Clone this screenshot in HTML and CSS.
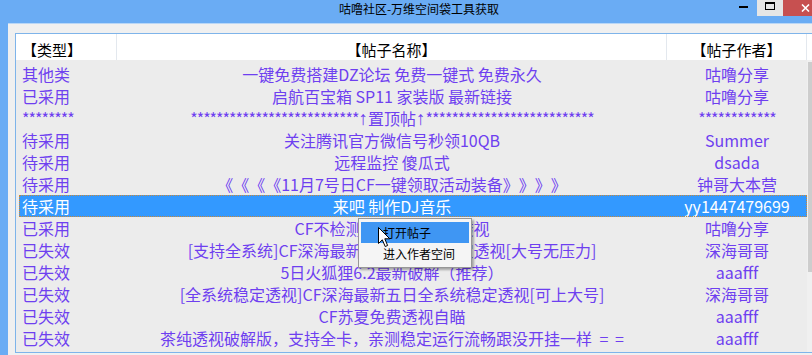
FILE: index.html
```html
<!DOCTYPE html>
<html lang="zh-CN">
  <head>
    <meta charset="UTF-8" />
    <title>咕噜社区-万维空间袋工具获取</title>
    <link rel="stylesheet" href="styles.css">
  </head>
  <body>
    <div class="window">
      <div class="titlebar">
        <div class="title">咕噜社区-万维空间袋工具获取</div>
        <div class="controls">
          <span class="btn min"><i></i></span>
          <span class="btn max"><i></i></span>
          <span class="btn close">
            <svg width="9" height="8" viewBox="0 0 9 8"><path d="M1 0.5 L8 7.5 M8 0.5 L1 7.5" stroke="#fff" stroke-width="1.6" fill="none" /></svg>
          </span>
        </div>
      </div>

      <div class="client">
        <div class="list">
          <div class="head">
            <div class="hc c1">【类型】</div>
            <div class="hc c2">【帖子名称】</div>
            <div class="hc c3">【帖子作者】</div>
            <div class="hc c4"></div>
          </div>
          <div class="body">
            <div class="rows">
              <div class="row"><span class="c1">其他类</span><span class="c2">一键免费搭建DZ论坛 免费一键式 免费永久</span><span class="c3">咕噜分享</span></div>
              <div class="row"><span class="c1">已采用</span><span class="c2">启航百宝箱 SP11 家装版 最新链接</span><span class="c3">咕噜分享</span></div>
              <div class="row"><span class="c1"><b class="stars">********</b></span><span class="c2"><b class="stars">**************************</b><b class="arrow">↑</b>置顶帖<b class="arrow">↑</b><b class="stars">**************************</b></span><span class="c3"><b class="stars">************</b></span></div>
              <div class="row"><span class="c1">待采用</span><span class="c2">关注腾讯官方微信号秒领10QB</span><span class="c3">Summer</span></div>
              <div class="row"><span class="c1">待采用</span><span class="c2">远程监控 傻瓜式</span><span class="c3">dsada</span></div>
              <div class="row"><span class="c1">待采用</span><span class="c2">《《《《11月7号日CF一键领取活动装备》》》》</span><span class="c3">钟哥大本营</span></div>
              <div class="row sel"><span class="c1">待采用</span><span class="c2">来吧 制作DJ音乐</span><span class="c3">yy1447479699</span></div>
              <div class="row"><span class="c1">已采用</span><span class="c2">CF不检测最新稳定自瞄透视</span><span class="c3">咕噜分享</span></div>
              <div class="row"><span class="c1">已失效</span><span class="c2">[支持全系统]CF深海最新五日全系统稳定透视[大号无压力]</span><span class="c3">深海哥哥</span></div>
              <div class="row"><span class="c1">已失效</span><span class="c2">5日火狐狸6.2最新破解（推荐）</span><span class="c3">aaafff</span></div>
              <div class="row"><span class="c1">已失效</span><span class="c2">[全系统稳定透视]CF深海最新五日全系统稳定透视[可上大号]</span><span class="c3">深海哥哥</span></div>
              <div class="row"><span class="c1">已失效</span><span class="c2">CF苏夏免费透视自瞄</span><span class="c3">aaafff</span></div>
              <div class="row"><span class="c1">已失效</span><span class="c2">茶纯透视破解版，支持全卡，亲测稳定运行流畅跟没开挂一样 <b class="eq">= =</b></span><span class="c3">aaafff</span></div>
            </div>
            <div class="scroll"><div class="thumb"></div></div>
          </div>
        </div>

        <div class="menu">
          <div class="menu-item hot">打开帖子</div>
          <div class="menu-item">进入作者空间</div>
        </div>

        <svg class="cursor" width="13" height="21" viewBox="0 0 13 21">
          <path d="M0.5 0.5 V16.5 L4.3 12.8 L7.2 19.5 L9.6 18.5 L6.8 11.8 H11.8 Z" fill="#fff" stroke="#000" stroke-width="1" />
        </svg>
      </div>
    </div>
  </body>
</html>
```

FILE: styles.css
```css
body {
  margin: 0;
  padding: 0;
  width: 812px;
  height: 355px;
  overflow: hidden;
  background: #f0f0f0;
  font-family: "Noto Sans CJK SC", "Noto Sans", sans-serif;
  text-spacing-trim: space-all;
}

.window {
  width: 840px;
  height: 355px;
  background: #6aacf4;
  display: flex;
  flex-direction: column;
}

/* title bar */
.titlebar {
  height: 23px;
  flex-shrink: 0;
  display: flex;
  align-items: flex-start;
}
.title {
  flex: 1;
  padding-left: 100px;
  text-align: center;
  font-size: 12px;
  line-height: 17px;
  color: #000;
}
.controls {
  display: flex;
  margin-right: 12px;
}
.btn {
  height: 16px;
  display: flex;
}
.min {
  width: 19px;
}
.min > i {
  width: 9px;
  height: 2px;
  background: #000;
  margin: 6px 0 0 1px;
}
.max {
  width: 26px;
  background: #e6e6e6;
}
.max > i {
  box-sizing: border-box;
  width: 10px;
  height: 8px;
  border: 1px solid #000;
  border-top-width: 2px;
  margin: 2px 0 0 8px;
}
.close {
  width: 45px;
  background: #c75050;
  justify-content: center;
  align-items: center;
}

/* client area */
.client {
  flex: 1;
  position: relative;
  margin: 0 8px;
  border-top: 1px solid #b9d7f7;
  padding: 9px 7px 0;
  background: #f0f0f0;
}

.list {
  height: 318px;
  border: 1px solid #7eb4ea;
  background: #ececec;
  display: flex;
  flex-direction: column;
  overflow: hidden;
}

.head {
  height: 26px;
  flex-shrink: 0;
  display: flex;
  background: #fff;
}
.hc {
  box-sizing: border-box;
  border-right: 1px solid #e3e8ee;
  font-size: 15px;
  line-height: 31px;
  color: #000;
  white-space: nowrap;
  overflow: hidden;
}
.head > .c1 {
  width: 101px;
  padding-left: 6px;
}
.head > .c2 {
  width: 550px;
  text-align: center;
}
.head > .c3 {
  width: 140px;
  text-align: center;
}
.head > .c4 {
  flex: 1;
  border-right: none;
}

.body {
  flex: 1;
  display: flex;
  min-height: 0;
}
.rows {
  width: 791px;
  padding-top: 3px;
}
.row {
  display: flex;
  margin-left: 3px;
  height: 22px;
  line-height: 22px;
  font-size: 16px;
  color: #6e3ff0;
  white-space: nowrap;
}
.row > span {
  box-sizing: border-box;
}
.row > .c1 {
  width: 98px;
  padding-left: 3px;
}
.row > .c2 {
  width: 550px;
  text-align: center;
}
.row > .c3 {
  width: 140px;
  text-align: center;
}
.row.sel {
  background: #3399ff;
  color: #fff;
  outline: 1px dotted #c8893a;
  outline-offset: -1px;
}

.row b {
  font-weight: normal;
}
.stars {
  letter-spacing: -1px;
}
.arrow {
  font-family: "Liberation Sans", sans-serif;
  font-size: 19px;
  line-height: 0;
}
.eq {
  margin-left: 4px;
  word-spacing: 3px;
}

.scroll {
  width: 17px;
  background: #f0f0f0;
}
.thumb {
  width: 15px;
  height: 210px;
  margin: 2px 0 0 1px;
  background: #cdcdcd;
}

/* context menu */
.menu {
  position: absolute;
  left: 350px;
  top: 194px;
  width: 114px;
  box-sizing: border-box;
  padding: 3px 2px;
  border: 1px solid #979797;
  background: #f5f5f5;
  box-shadow: 2px 2px 2px rgba(0, 0, 0, 0.3);
  font-size: 12px;
  color: #000;
}
.menu-item {
  height: 21px;
  line-height: 21px;
  padding-left: 22px;
}
.menu-item.hot {
  background: #3f96f3;
}

.cursor {
  position: absolute;
  left: 370px;
  top: 203px;
}
```
